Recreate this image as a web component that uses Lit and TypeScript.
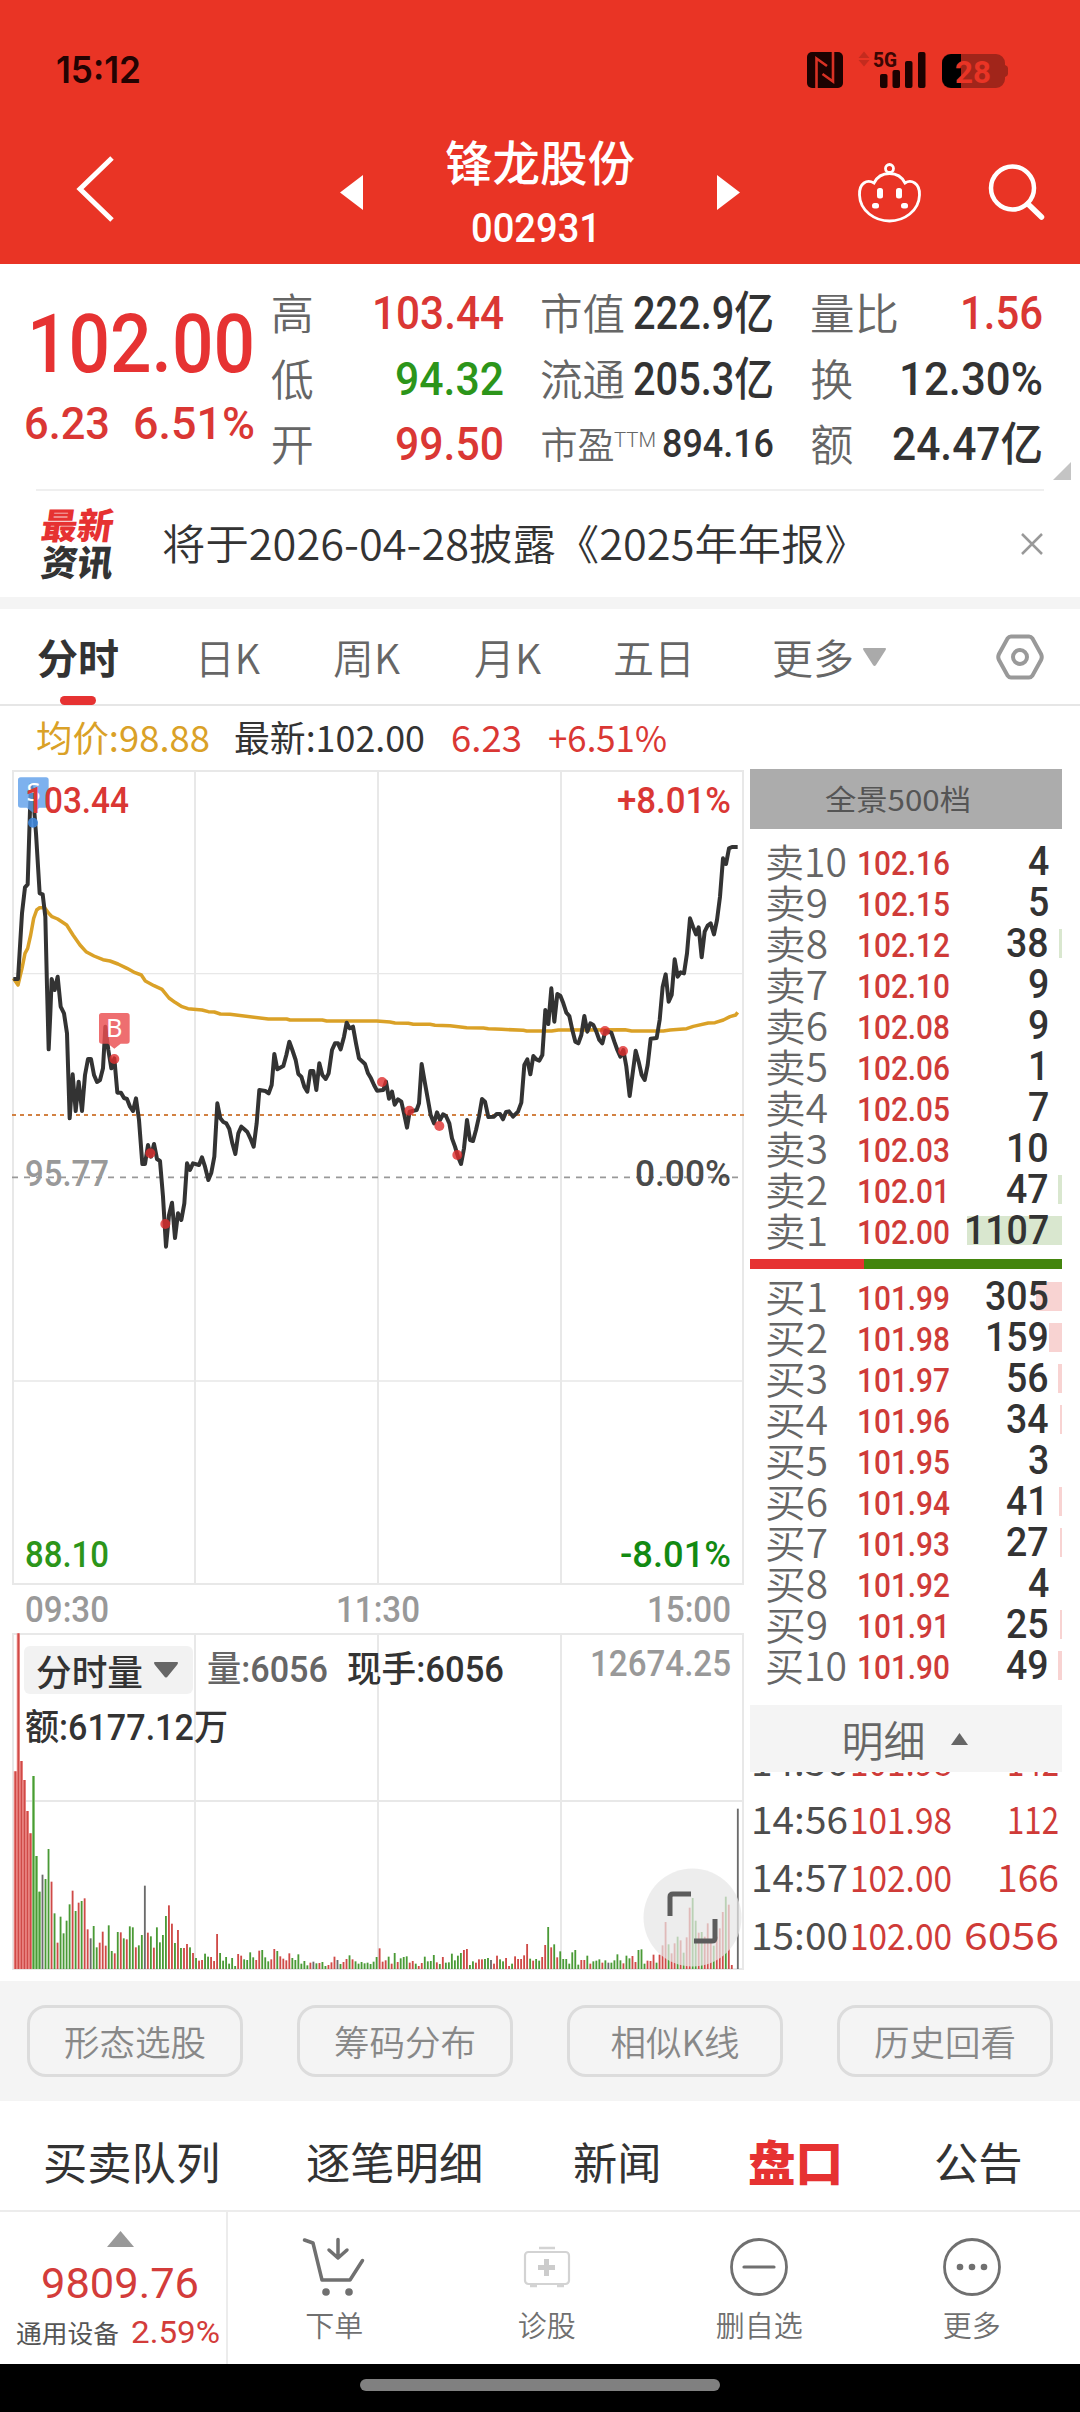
import { LitElement, html, svg, css } from "lit";
import { customElement, property } from "lit/decorators.js";

/** One line of text condensed or stretched to an exact advance width. */
@customElement("fit-text")
class FitText extends LitElement {
  @property() text = "";
  @property({ type: Number }) w = 0;

  static styles = css`
    :host { display: inline-block; white-space: nowrap; text-align: left; }
    .t { display: inline-block; transform-origin: 0 50%; }
  `;

  updated() {
    const span = this.renderRoot.querySelector(".t") as HTMLElement;
    span.style.transform = "none";
    const natural = span.getBoundingClientRect().width;
    this.style.width = this.w + "px";
    if (natural > 0) span.style.transform = `scaleX(${this.w / natural})`;
  }

  render() {
    return html`<span class="t">${this.text}</span>`;
  }
}

const fit = (text: string, w: number, cls = "") =>
  html`<fit-text class=${cls} .text=${text} .w=${w}></fit-text>`;

const points = (s: string) => s.trim();

/* Chart geometry is in thirds of a pixel. */
const PRICE_LINE = points(`
40,657 54,657 66,460 75,382 83,373 90,150 93,75 99,110 101,130 108,220 119,400 128,403 136,470 141,680 146,868 151,760
155,657 164,690 173,650 182,740 192,760 201,820 209,1075 218,943 227,1053 236,965 246,1053 255,945 264,897 273,897
282,945 291,966 300,960 309,925 316,800 325,870 334,925 343,895 352,998 363,998 372,1014 381,1017 390,1040 399,1053
408,1015 417,1080 427,1212 435,1212 444,1155 453,1190 462,1152 471,1197 480,1203 489,1310 498,1460 507,1365 516,1328
525,1434 534,1360 544,1380 553,1330 561,1210 570,1230 579,1210 597,1215 606,1192 615,1220 625,1260 634,1238 643,1190
652,1030 661,1075 670,1086 679,1090 688,1107 697,1150 706,1182 715,1120 724,1100 733,1108 742,1116 751,1135 761,1160
770,1090 778,990 796,993 806,1000 815,975 823,882 832,928 850,918 859,885 868,845 877,870 887,900 895,942 904,950
913,980 922,995 931,933 940,933 949,990 958,910 967,945 977,957 986,940 996,870 1005,850 1014,850 1022,868 1032,830
1040,788 1049,805 1059,800 1068,850 1077,895 1095,912 1104,940 1113,955 1122,975 1131,992 1150,990 1158,965 1167,1016
1176,995 1184,1034 1194,1018 1204,1025 1212,1060 1221,1103 1229,1055 1250,1050 1257,1030 1265,912 1275,970 1284,1020
1292,1065 1302,1090 1311,1057 1320,1080 1329,1063 1338,1068 1348,1090 1356,1135 1365,1160 1374,1190 1383,1212
1392,1165 1401,1080 1410,1140 1419,1143 1428,1110 1437,1070 1446,1017 1455,1025 1465,1071 1482,1070 1490,1062
1500,1062 1509,1078 1518,1056 1527,1054 1539,1070 1554,1055 1564,1028 1573,915 1582,898 1591,943 1600,888 1609,898
1618,902 1627,885 1636,750 1645,792 1654,685 1663,785 1672,702 1681,707 1690,730 1699,758 1708,768 1717,810 1726,845
1735,850 1744,825 1753,768 1762,815 1771,790 1780,795 1789,815 1798,840 1807,850 1816,813 1834,818 1843,845 1852,870
1861,890 1870,870 1879,920 1889,1008 1898,940 1907,872 1916,905 1925,945 1934,960 1943,915 1952,836 1970,834 1979,780
1988,680 1997,643 2006,725 2015,705 2024,598 2033,650 2042,637 2052,640 2061,580 2070,475 2079,500 2088,523 2096,502
2105,592 2114,515 2123,497 2132,490 2142,523 2151,480 2160,410 2169,295 2178,312 2187,265 2196,261 2213,261`);

const AVERAGE_LINE = points(`
40,655 54,675 66,625 75,580 83,565 92,525 101,475 110,450 119,443 134,443 146,460 156,470 173,477 200,495 219,525
240,555 258,575 282,588 309,599 330,603 354,612 381,625 405,638 424,645 436,663 462,677 486,688 507,714 525,727
546,740 564,746 606,750 625,755 643,756 661,762 690,763 805,777 860,777 870,780 967,780 980,783 1130,783 1170,786
1185,789 1225,790 1240,793 1290,793 1305,796 1350,797 1400,803 1450,804 1465,806 1505,808 1570,811 1580,813 1655,813
1675,810 1875,809 1895,813 1990,813 2010,810 2060,806 2080,799 2125,789 2145,788 2170,780 2190,770 2207,765 2213,757`);

const TRADE_DOTS = [
  [343, 897], [451, 1180], [496, 1392], [1146, 966], [1228, 1052],
  [1318, 1098], [1372, 1185], [1815, 813], [1869, 873],
];

/* Top edge of each minute's volume bar, then its colour: r up, g down, k flat. */
const VOLUME = `
814r 400r 783r 840r 933r 1000r 828g 1068g 1175g 1124k 1137g 1047g 1145r 1240g 1328r 1250g 1300g 1262g 1213g 1172r
1233g 1208r 1203g 1195r 1288r 1315k 1278g 1342g 1328r 1295r 1337r 1276g 1353g 1360r 1296g 1297r 1315g 1318r 1279g
1282g 1342r 1336g 1305g 1157k 1298r 1309g 1343r 1282g 1327g 1305g 1248g 1216r 1271r 1329g 1290r 1344g 1344r 1332r
1342g 1359r 1374g 1382r 1380r 1361g 1370g 1371r 1383r 1302r 1359g 1382g 1371g 1391g 1374g 1398g 1362r 1367r 1378g
1380g 1357g 1372g 1380r 1352r 1350g 1372g 1384g 1378r 1347r 1353g 1369r 1376r 1381r 1360r 1374g 1380g 1363g 1391g
1383g 1396g 1388r 1385k 1390g 1389r 1386g 1398g 1395r 1387r 1370r 1380k 1392g 1386r 1377r 1366g 1378r 1384g 1391g
1386g 1390g 1388g 1392g 1385g 1371g 1345r 1385r 1381r 1370g 1391r 1359g 1386r 1375g 1371g 1369g 1388r 1383r 1391g
1398r 1389r 1370g 1384g 1383g 1365g 1387r 1392g 1371r 1388g 1387g 1361g 1381g 1367g 1359g 1350r 1347r 1395g 1384g
1388r 1378r 1378r 1377g 1374g 1380k 1391r 1367r 1378g 1384g 1374r 1398r 1391g 1369r 1377r 1377r 1366r 1332r 1376g
1382r 1377g 1382g 1371r 1335r 1281g 1342r 1333g 1372r 1354g 1377g 1377g 1391g 1357g 1350g 1394g 1380r 1380r 1367g
1391r 1384g 1382g 1378g 1388r 1381g 1388k 1388g 1381g 1363g 1381g 1390r 1367g 1375g 1368r 1386r 1350g 1348g 1391g
1382r 1383r 1364r 1388g 1364r 1336r 1266r 1333g 1360r 1330r 1310g 1321r 1358g 1312r 1223r 1194g 1262g 1298r 1296g
1310r 1270r 1320r 1337g 1310r 1285r 1236r 1190g 1214r 1395r 1407r 926k`
  .trim()
  .split(/\s+/)
  .map((v) => ({ top: parseInt(v, 10), dir: v.slice(-1) }));

const SELLS: [string, string, string, number][] = [
  ["卖10", "102.16", "4", 0], ["卖9", "102.15", "5", 0], ["卖8", "102.12", "38", 3],
  ["卖7", "102.10", "9", 0], ["卖6", "102.08", "9", 0], ["卖5", "102.06", "1", 0],
  ["卖4", "102.05", "7", 0], ["卖3", "102.03", "10", 0], ["卖2", "102.01", "47", 4],
  ["卖1", "102.00", "1107", 95],
];
const BUYS: [string, string, string, number][] = [
  ["买1", "101.99", "305", 26], ["买2", "101.98", "159", 13], ["买3", "101.97", "56", 4],
  ["买4", "101.96", "34", 2], ["买5", "101.95", "3", 0], ["买6", "101.94", "41", 3],
  ["买7", "101.93", "27", 2], ["买8", "101.92", "4", 0], ["买9", "101.91", "25", 2],
  ["买10", "101.90", "49", 4],
];
const TICKS: [string, string, string, number][] = [
  ["14:56", "101.98", "142", 52], ["14:56", "101.98", "112", 52],
  ["14:57", "102.00", "166", 62], ["15:00", "102.00", "6056", 95],
];

@customElement("app-root")
class AppRoot extends LitElement {
  static styles = css`
    :host {
      display: block; width: 1080px; height: 2412px; overflow: hidden; background: #fff; color: #333;
      font-family: "Noto Sans CJK SC", "Noto Sans", sans-serif; font-size: 36px; white-space: nowrap;
    }
    * { box-sizing: border-box; }
    svg { display: block; overflow: visible; }
    .din { font-family: Roboto, "Noto Sans CJK SC", sans-serif; font-weight: 500; }
    .red { color: #da3734; } .green { color: #2c951a; }

    .top { background: #e93425; height: 264px; }
    .status { height: 130px; padding: 10px 72px 0 56px; display: flex; align-items: center; justify-content: space-between; }
    .clock { font: 600 37px/40px Inter, sans-serif; color: #240302; }
    .title { height: 134px; display: grid; grid-template-columns: 340px 23px 354px 23px 117px 63px 68px 56px; }
    .back { margin: 26px 0 0 75px; }
    .tri { margin-top: 45px; }
    .names { color: #fff; padding-top: 6px; display: flex; flex-direction: column; align-items: center; }
    .name { font-size: 47.5px; line-height: 50px; font-weight: 500; }
    .code { font: 500 41px/36px Roboto, sans-serif; margin: 24px 9px 0 0; }
    .robot { margin-top: 32px; }
    .search { margin-top: 34px; }

    .quote { height: 225px; padding: 17px 37px 0 22px; display: flex; }
    .main { width: 249px; }
    .last { font-size: 82px; line-height: 80px; margin: 23px 0 0 5px; color: #e63232; }
    .chg { display: flex; justify-content: space-between; font-size: 45px; line-height: 46px; margin-top: 17px; width: 231px; margin-left: 2px; }
    .stats { display: flex; flex-direction: column; width: 234px; margin-right: 36px; }
    .stats.end { margin-right: 0; width: 233px; }
    .stat { height: 65.5px; line-height: 65px; display: flex; justify-content: space-between; font-size: 46px; }
    .lab { font-size: 43px; font-weight: 350; color: #666; position: relative; top: -2px; }
    .lab.sm { font-size: 37px; top: -1px; }
    .ttm { font: 300 20px/30px Roboto, sans-serif; vertical-align: 12px; }
    .corner { height: 0; display: flex; justify-content: flex-end; padding-right: 9px; }
    .corner svg { margin-top: -27px; }
    .rule { height: 2px; margin: 0 36px; background: #efefef; }

    .news { height: 106px; padding: 0 37px 0 42px; display: flex; align-items: center; }
    .logo { width: 120px; font-weight: 900; font-size: 36px; line-height: 37px; color: #333; padding-bottom: 5px; }
    .logo div { transform: skewX(-8deg); }
    .logo .hot { color: #e63232; font-size: 36px; }
    .headline { font-size: 41.5px; line-height: 60px; flex: 1; font-weight: 350; padding-bottom: 4px; }
    .band { height: 12px; background: #f4f4f4; }

    .tabs { height: 97px; border-bottom: 2px solid #e6e6e6; display: grid; grid-template-columns: 37px 158px 138px 141px 139px 159px 91px 1fr; font-size: 41px; line-height: 94px; color: #666; font-weight: 350; }
    .tabs .on { color: #333; font-weight: 700; position: relative; grid-column: 2; }
    .tabs .on::after { content: ""; position: absolute; left: 23px; bottom: -1px; width: 36px; height: 9px; border-radius: 5px; background: #e63232; }
    .arrow { margin-top: 39px; }
    .hex { margin: 25px 0 0 133px; }

    .body { height: 1275px; display: flex; }
    .left { width: 750px; padding-left: 12px; }
    .info { height: 64px; padding: 0 0 0 24px; display: flex; line-height: 60px; font-size: 36px; }
    .info .avg { color: #daa127; width: 198px; }
    .info .now { width: 217px; }
    .info .d1 { width: 97px; }
    .plot { position: relative; width: 733px; }
    .price { height: 817px; }
    .lbl { position: absolute; font-size: 37px; line-height: 40px; }
    .l { left: 13px; } .r { right: 14px; }
    .times { height: 46px; display: flex; justify-content: space-between; padding: 0 19px 0 13px; color: #999; font-size: 37px; line-height: 46px; }
    .vol { height: 337px; }
    .vhead { position: absolute; left: 12px; top: 12px; display: flex; align-items: center; font-size: 36px; line-height: 50px; }
    .pick { width: 169px; height: 48px; border-radius: 6px; background: #f2f2f2; display: flex; align-items: center; padding-left: 12px; gap: 11px; margin-right: 14px; font-family: "Noto Sans CJK SC", sans-serif; line-height: 44px; }
    .grey { color: #666; margin-right: 19px; }
    .zoom { position: absolute; right: 3px; bottom: 3px; width: 99px; height: 99px; }

    .right { width: 312px; padding-top: 63px; }
    .pano { height: 60px; background: #acacac; color: #555; font-size: 29px; line-height: 58px; text-align: center; padding-right: 16px; }
    .book { padding-top: 12px; height: 430px; }
    .book.buy { padding-top: 7px; height: 436px; }
    .lvl { height: 41px; line-height: 41px; display: flex; align-items: center; position: relative; padding-left: 15px; }
    .who { width: 92px; font-size: 39px; color: #666; font-weight: 350; position: relative; top: -1px; }
    .px { font-size: 33px; position: relative; top: 2px; color: #cf3b38; }
    .qty { flex: 1; text-align: right; padding-right: 13px; font-size: 41px; position: relative; color: #333; }
    .depth { position: absolute; right: 0; top: 6px; height: 29px; background: #d9e7cf; }
    .buy .depth { background: #f8d3d2; }
    .ratio { height: 10px; display: flex; background: #43850d; }
    .ratio div { width: 114px; background: #e63232; }
    .detail { height: 67px; background: #f4f4f4; display: flex; align-items: center; justify-content: center; gap: 25px; color: #666; font-size: 42px; line-height: 65px; font-weight: 350; padding: 0 3px 0 0; }
    .ticks { height: 209px; overflow: hidden; display: flex; flex-direction: column; justify-content: flex-end; padding-bottom: 18px; }
    .tick { height: 58px; flex: none; line-height: 57px; font-size: 38px; display: flex; padding: 0 3px 0 1px; color: #4d4d4d; }
    .tick .tp { font-size: 36px; color: #cf3b38; margin-left: 2px; position: relative; top: 1px; }
    .tick .tv { flex: 1; text-align: right; color: #cf3b38; }

    .tools { height: 120px; background: #f4f4f4; display: flex; justify-content: space-between; padding: 24px 27px 0; }
    .tool { width: 216px; height: 72px; border: 3px solid #dcdcdc; border-radius: 19px; text-align: center; font-size: 35.5px; line-height: 65px; color: #888; font-weight: 350; }
    .tabs2 { height: 111px; display: flex; font-size: 44.3px; line-height: 120px; border-bottom: 2px solid #ececec; padding-left: 43px; }
    .hot { color: #e63232; font-weight: 900; font-size: 47.5px; }
    .nav { height: 152px; display: flex; }
    .index { width: 228px; border-right: 2px solid #ececec; display: flex; flex-direction: column; align-items: center; color: #d33c3a; padding: 19px 0 0 14px; }
    .idx { font: 400 43px/44px Roboto, sans-serif; margin-top: 14px; }
    .sector { display: flex; align-items: center; gap: 12px; font-size: 25.5px; line-height: 34px; color: #555; margin: 10px 5px 0 0; }
    .pct { font: 400 32px/34px Roboto, sans-serif; color: #d33c3a; }
    .item { width: 212.5px; display: flex; flex-direction: column; align-items: center; color: #707070; font-size: 29px; line-height: 36px; font-weight: 350; }
    .ico { height: 94px; display: flex; align-items: center; padding-top: 15px; }
    .gesture { height: 48px; background: #000; display: flex; justify-content: center; padding-top: 15px; }
    .pill { width: 360px; height: 12px; border-radius: 6px; background: #808080; }
  `;

  private statusIcons() {
    return svg`<svg width="201" height="36" viewBox="807 52 201 36">
      <rect x="807" y="52" width="36" height="36" rx="5" fill="#1c0201"/>
      <path d="M816.5 88V58.5L827 66M833 52v29.5L822.500 74" fill="none" stroke="#d93124" stroke-width="2.6"/>
      <path d="M864 51.500l5.500 6.500h-11zM858.500 60h11l-5.500 6.500z" fill="#c42b1e"/>
      <text x="873" y="67" font-family="Roboto" font-weight="800" font-size="20" textLength="24" lengthAdjust="spacingAndGlyphs" fill="#3a0603">5G</text>
      <g fill="#1c0201"><rect x="880" y="74" width="7.500" height="14" rx="2"/><rect x="892.500" y="70" width="7.500" height="18" rx="2"/><rect x="905" y="61" width="7.500" height="27" rx="2"/><rect x="918" y="52" width="7.500" height="36" rx="2"/></g>
      <path d="M950 54h46a9 9 0 0 1 9 9v2q3 1 3 3v6q0 2-3 3v2a9 9 0 0 1-9 9h-46a8 8 0 0 1-8-8V62a8 8 0 0 1 8-8z" fill="#a1251a"/>
      <path d="M961 54h-10a9 9 0 0 0-9 9v16a9 9 0 0 0 9 9h10z" fill="#000"/>
      <text x="955" y="83" font-family="Roboto" font-weight="700" font-size="31" textLength="36" lengthAdjust="spacingAndGlyphs" fill="#e93425">28</text>
    </svg>`;
  }

  private priceChart() {
    return html`<div class="plot price">
      ${svg`<svg width="733" height="817" viewBox="36 30 2199 2451">
        <g fill="none" stroke="#e8e8e8" stroke-width="6">
          <path d="M39 33H2229V2472H39zM585 33V2472M1134 33V2472M1683 33V2472"/>
          <path d="M39 641H2229M39 1863H2229" stroke-width="4"/>
        </g>
        <path d="M36 1252H2214" stroke="#999" stroke-width="5" stroke-dasharray="18 18"/>
        <path d="M36 1065H2232" stroke="#d28142" stroke-width="6" stroke-dasharray="12 12"/>
        <polyline points=${AVERAGE_LINE} fill="none" stroke="#daa127" stroke-width="10.500" stroke-linejoin="round"/>
        <polyline points=${PRICE_LINE} fill="none" stroke="#333" stroke-width="12" stroke-linejoin="round"/>
        ${TRADE_DOTS.map(([x, y]) => svg`<circle cx=${x} cy=${y} r="15" fill="#e02e2e" fill-opacity=".8"/>`)}
        <circle cx="99" cy="188" r="15" fill="#3f86d9" fill-opacity=".9"/>
        <path d="M305 759H381a8 8 0 0 1 8 8V843a8 8 0 0 1-8 8H362L343 866 324 851H305a8 8 0 0 1-8-8V767a8 8 0 0 1 8-8z" fill="#ea4e50" fill-opacity=".82"/>
        <text x="343" y="831" text-anchor="middle" font-family="Noto Sans" font-size="76" fill="#fff">B</text>
        <path d="M62 52H138a8 8 0 0 1 8 8V135a8 8 0 0 1-8 8H118L99 158 80 143H62a8 8 0 0 1-8-8V60a8 8 0 0 1 8-8z" fill="#5d9eea" fill-opacity=".8"/>
        <text x="100" y="123" text-anchor="middle" font-family="Noto Sans" font-size="76" fill="#fff">S</text>
      </svg>`}
      <div class="lbl din l red" style="top:11px">${fit("103.44", 104)}</div>
      <div class="lbl din r red" style="top:11px">${fit("+8.01%", 114)}</div>
      <div class="lbl din l" style="top:384px;color:#999">${fit("95.77", 84)}</div>
      <div class="lbl din r" style="top:384px;color:#4a4a4a">${fit("0.00%", 96)}</div>
      <div class="lbl din l green" style="top:765px">${fit("88.10", 84)}</div>
      <div class="lbl din r" style="top:765px;color:#128a12">${fit("-8.01%", 111)}</div>
    </div>`;
  }

  private volumeChart() {
    const fill: Record<string, string> = { r: "#cf4a47", g: "#4a9a36", k: "#6b6b6b" };
    return html`<div class="plot vol">
      ${svg`<svg width="733" height="337" viewBox="36 399 2199 1011">
        <path d="M39 402H2229V1407H39zM585 402V1407M1134 402V1407M1683 402V1407M39 903H2229" fill="none" stroke="#e8e8e8" stroke-width="6"/>
        <path d="M41 1407V814H50V400H60V783H69V840H78V933H87V1000H96V1407z" fill="#f5a09e"/>
        <path d="M96 1407V828H105V1068H114V1175H123V1407z" fill="#b5e3a8"/>
        ${VOLUME.map((b, i) => svg`<rect x=${43.5 + i * 9.03} y=${b.top} width="5.5" height=${1407 - b.top} fill=${fill[b.dir]}/>`)}
      </svg>`}
      <div class="vhead din">
        <div class="pick">${fit("分时量", 107)}<svg width="24" height="16"><path d="M1 0h22q2 0 0 3L14 14q-2 3-4 0L1 3q-2-3 0-3z" fill="#666"/></svg></div>
        <span class="grey">${fit("量:6056", 121)}</span>${fit("现手:6056", 157)}
      </div>
      <div class="lbl din r" style="top:11px;color:#999">${fit("12674.25", 141)}</div>
      <div class="lbl din l" style="top:75px;font-size:36px">${fit("额:6177.12万", 203)}</div>
      <div class="zoom">${svg`<svg width="99" height="99"><circle cx="49.500" cy="49.500" r="49" fill="#e6e6e6" fill-opacity=".72"/><path d="M27 48V29q0-3 3-3h18" fill="none" stroke="#5c5c5c" stroke-width="5"/><path d="M72 51v19q0 3-3 3H51" fill="none" stroke="#5c5c5c" stroke-width="5"/></svg>`}</div>
    </div>`;
  }

  private level([who, px, qty, depth]: [string, string, string, number]) {
    return html`<div class="lvl">
      ${depth ? html`<div class="depth" style="width:${depth}px"></div>` : ""}
      <span class="who">${fit(who, who.length === 3 ? 82 : 63)}</span>
      <span class="px din">${fit(px, 93)}</span>
      <span class="qty din">${fit(qty, qty.length * 21.3)}</span>
    </div>`;
  }

  private stat(label: unknown, value: string, w: number, tone = "", size = "") {
    return html`<div class="stat"><span class="lab ${size}">${label}</span><span class="din ${tone}" style=${size ? "font-size:39px" : ""}>${fit(value, w)}</span></div>`;
  }

  render() {
    return html`
      <header class="top">
        <div class="status"><span class="clock">${fit("15:12", 85)}</span>${this.statusIcons()}</div>
        <div class="title">
          <svg class="back" width="40" height="66"><path d="M37 2L5 33 37 64" fill="none" stroke="#fff" stroke-width="5"/></svg>
          <svg class="tri" width="23" height="35"><path d="M23 0V35L0 17.500z" fill="#fff"/></svg>
          <div class="names"><div class="name">锋龙股份</div><div class="code">${fit("002931", 130)}</div></div>
          <svg class="tri" width="23" height="35"><path d="M0 0V35L23 17.500z" fill="#fff"/></svg>
          <span></span>
          <svg class="robot" width="64" height="60" viewBox="857 162 64 60"><g fill="none" stroke="#fff" stroke-width="2.800"><circle cx="889.500" cy="168.500" r="4"/><path d="M874 183C877 177 883 173.500 889.500 173.500S902 177 905 183C911 179 920 183 919.500 195C919 211 904 221 889.500 221S860 211 859.500 195C859 183 867 179 874 183z"/></g><g fill="#fff"><rect x="877" y="188" width="6" height="10.500" rx="2.500"/><rect x="896" y="188" width="6" height="10.500" rx="2.500"/><rect x="872" y="203" width="7" height="5.500" rx="2.500"/><rect x="901" y="203" width="7" height="5.500" rx="2.500"/></g></svg>
          <span></span>
          <svg class="search" width="56" height="56" viewBox="988 164 56 56"><circle cx="1012.500" cy="188" r="21.500" fill="none" stroke="#fff" stroke-width="4.500"/><path d="M1028 204l13.500 13" stroke="#fff" stroke-width="5.500" stroke-linecap="round"/></svg>
        </div>
      </header>

      <section class="quote">
        <div class="main">
          <div class="last din">${fit("102.00", 228)}</div>
          <div class="chg din red">${fit("6.23", 86)}${fit("6.51%", 122)}</div>
        </div>
        <div class="stats">
          ${this.stat("高", "103.44", 132, "red")}${this.stat("低", "94.32", 109, "green")}${this.stat("开", "99.50", 109, "red")}
        </div>
        <div class="stats">
          ${this.stat(fit("市值", 85), "222.9亿", 141)}${this.stat(fit("流通", 85), "205.3亿", 141)}
          ${this.stat(html`市盈<span class="ttm">${fit("TTM", 42)}</span>`, "894.16", 112, "", "sm")}
        </div>
        <div class="stats end">
          ${this.stat(fit("量比", 89), "1.56", 83, "red")}${this.stat("换", "12.30%", 144)}${this.stat("额", "24.47亿", 151)}
        </div>
      </section>
      <div class="corner"><svg width="18" height="18"><path d="M18 0V18H0z" fill="#c4c4c4"/></svg></div>
      <div class="rule"></div>
      <section class="news">
        <div class="logo"><div class="hot">最新</div><div>资讯</div></div>
        <div class="headline">${fit("将于2026-04-28披露《2025年年报》", 706)}</div>
        <svg width="22" height="22"><path d="M1 1L21 21M21 1L1 21" stroke="#999" stroke-width="2.500"/></svg>
      </section>
      <div class="band"></div>

      <nav class="tabs">
        <span class="on">分时</span><span>${fit("日K", 65)}</span><span>${fit("周K", 67)}</span><span>${fit("月K", 67)}</span><span>五日</span><span>更多</span>
        <span class="tools-end" style="display:flex">
          <svg class="arrow" width="23" height="19"><path d="M1 0h21q2 0 0 3L13 17q-1.500 2-3 0L1 3q-2-3 0-3z" fill="#aaa"/></svg>
          <svg style="margin:25px 0 0 110px" width="48" height="46"><path d="M15 2.500H33Q35 2.500 36.500 4.500L45 20Q46.500 23 45 26L36.500 41.500Q35 43.500 33 43.500H15Q13 43.500 11.500 41.500L3 26Q1.500 23 3 20L11.500 4.500Q13 2.500 15 2.500z" fill="none" stroke="#999" stroke-width="4"/><circle cx="24" cy="23" r="7" fill="none" stroke="#999" stroke-width="4"/></svg>
        </span>
      </nav>

      <section class="body">
        <div class="left">
          <div class="info"><span class="avg">${fit("均价:98.88", 174)}</span><span class="now">${fit("最新:102.00", 191)}</span><span class="d1 red">${fit("6.23", 71)}</span><span class="red">${fit("+6.51%", 119)}</span></div>
          ${this.priceChart()}
          <div class="times din">${fit("09:30", 84)}${fit("11:30", 84)}${fit("15:00", 84)}</div>
          ${this.volumeChart()}
        </div>
        <aside class="right">
          <div class="pano">${fit("全景500档", 146)}</div>
          <div class="book">${SELLS.map((r) => this.level(r))}</div>
          <div class="ratio"><div></div></div>
          <div class="book buy">${BUYS.map((r) => this.level(r))}</div>
          <div class="detail">明细<svg width="17" height="12"><path d="M8.500 0L17 12H0z" fill="#666"/></svg></div>
          <div class="ticks">${TICKS.map(([t, p, v, w]) => html`<div class="tick">${fit(t, 97)}<span class="tp">${fit(p, 102)}</span><span class="tv">${fit(v, w)}</span></div>`)}</div>
        </aside>
      </section>

      <section class="tools">${["形态选股", "筹码分布", "相似K线", "历史回看"].map((t) => html`<div class="tool">${t}</div>`)}</section>
      <nav class="tabs2">
        <span style="width:263px">买卖队列</span><span style="width:267px">逐笔明细</span><span style="width:175px">新闻</span><span class="hot" style="width:186px">盘口</span><span>公告</span>
      </nav>
      <footer class="nav">
        <div class="index">
          <svg width="27" height="16"><path d="M13.500 0L27 16H0z" fill="#999"/></svg>
          <div class="idx">${fit("9809.76", 158)}</div>
          <div class="sector">${fit("通用设备", 103)}<span class="pct">${fit("2.59%", 89)}</span></div>
        </div>
        <div class="item"><div class="ico"><svg width="64" height="60" viewBox="303 2237 64 60"><g fill="none" stroke="#707070" stroke-width="3.500" stroke-linecap="round" stroke-linejoin="round"><path d="M305.500 2240l8.500 3 9 37h28l12.500-19.500M339 2239.500v18M330 2250l9 8 9-8"/></g><g fill="#707070"><circle cx="327" cy="2292" r="3.800"/><circle cx="350" cy="2292" r="3.800"/></g></svg></div>下单</div>
        <div class="item"><div class="ico"><svg width="46" height="60" viewBox="524 2237 46 60"><rect x="525" y="2252" width="44" height="32" rx="3.500" fill="none" stroke="#d3d3d3" stroke-width="2.200"/><path d="M539 2248h16M530 2286h7M557 2286h7" stroke="#d3d3d3" stroke-width="2.500"/><path d="M546.500 2259v17M538 2267.500h17" stroke="#ccc" stroke-width="5"/></svg></div>诊股</div>
        <div class="item"><div class="ico"><svg width="58" height="58"><circle cx="29" cy="29" r="27.500" fill="none" stroke="#707070" stroke-width="2.800"/><path d="M14 29h30" stroke="#707070" stroke-width="3.200" stroke-linecap="round"/></svg></div>删自选</div>
        <div class="item"><div class="ico"><svg width="58" height="58"><circle cx="29" cy="29" r="27.500" fill="none" stroke="#707070" stroke-width="2.800"/><g fill="#707070"><circle cx="17" cy="29" r="3.300"/><circle cx="29" cy="29" r="3.300"/><circle cx="41" cy="29" r="3.300"/></g></svg></div>更多</div>
      </footer>
      <div class="gesture"><div class="pill"></div></div>
    `;
  }
}
